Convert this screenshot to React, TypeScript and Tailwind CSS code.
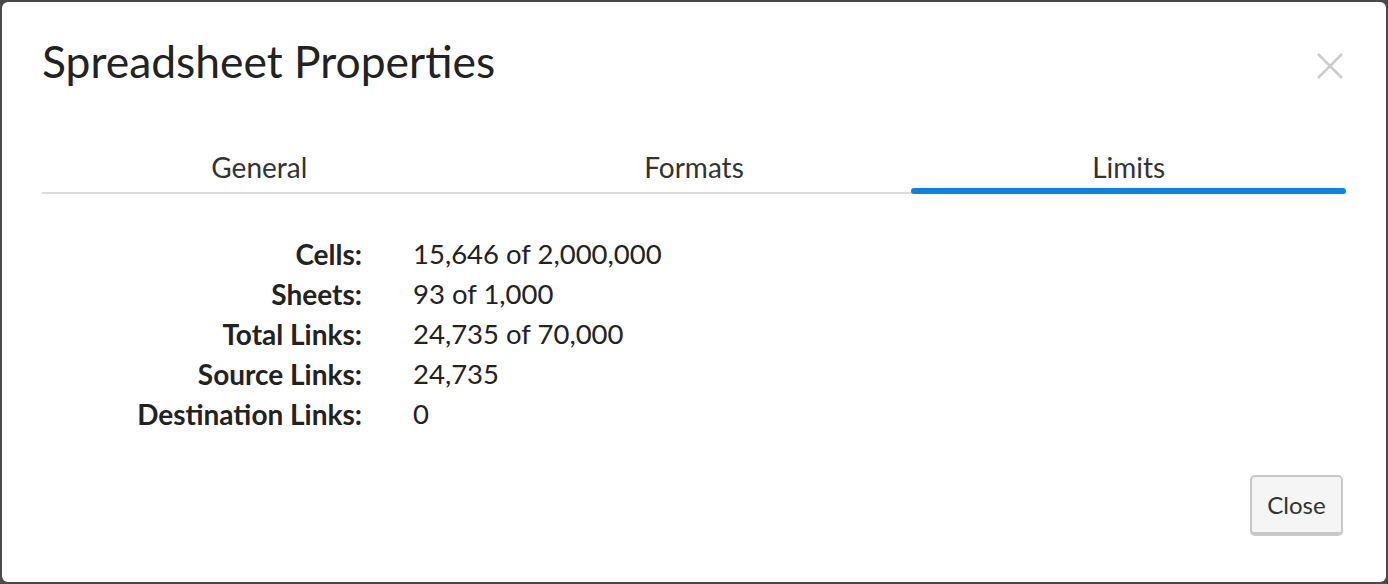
const rows = [
  { label: "Cells:", value: "15,646 of 2,000,000" },
  { label: "Sheets:", value: "93 of 1,000" },
  { label: "Total Links:", value: "24,735 of 70,000" },
  { label: "Source Links:", value: "24,735" },
  { label: "Destination Links:", value: "0" },
];

const tabs = ["General", "Formats", "Limits"];

export default function App() {
  return (
    <div className="h-[584px] w-[1388px] bg-[#4a4a4a] p-[2px] font-['Lato','Liberation_Sans',sans-serif] text-[#333]">
      <div className="flex h-full flex-col rounded-[6px] bg-white px-10">
        <div className="flex items-start justify-between pt-[35px]">
          <h1 className="text-[44.4px] leading-[48px] text-[#222]">Spreadsheet Properties</h1>
          <button className="mr-[3px] mt-[16px]">
            <svg width="26" height="26" viewBox="0 0 26 26" fill="none" stroke="#cccccc" strokeWidth="2.6">
              <path d="M1 1 L25 25 M25 1 L1 25" />
            </svg>
          </button>
        </div>

        <div className="mt-[65px] grid grid-cols-3 border-b-2 border-[#dcdcdc]">
          {tabs.map((tab) => (
            <div key={tab} className="relative pb-[8px] text-center text-[28px] leading-[34px]">
              {tab}
              {tab === "Limits" ? (
                <div className="absolute inset-x-0 bottom-[-2px] h-[6px] rounded-[3px] bg-[#0984e3]" />
              ) : null}
            </div>
          ))}
        </div>

        <div className="mt-[40px] grid grid-cols-[320px_1fr] gap-x-[51px] text-[27.5px] leading-[40px]">
          {rows.map((row) => (
            <div key={row.label} className="contents">
              <div className="text-right text-[28px] font-bold text-[#222]">{row.label}</div>
              <div className="text-[#222]">{row.value}</div>
            </div>
          ))}
        </div>

        <div className="mt-auto flex justify-end pb-[46px]">
          <button className="mr-[3px] h-[61px] w-[93px] rounded-[5px] border-2 border-b-4 border-[#c8c8c8] bg-[#f5f5f5] text-[24px] text-[#333]">
            Close
          </button>
        </div>
      </div>
    </div>
  );
}
